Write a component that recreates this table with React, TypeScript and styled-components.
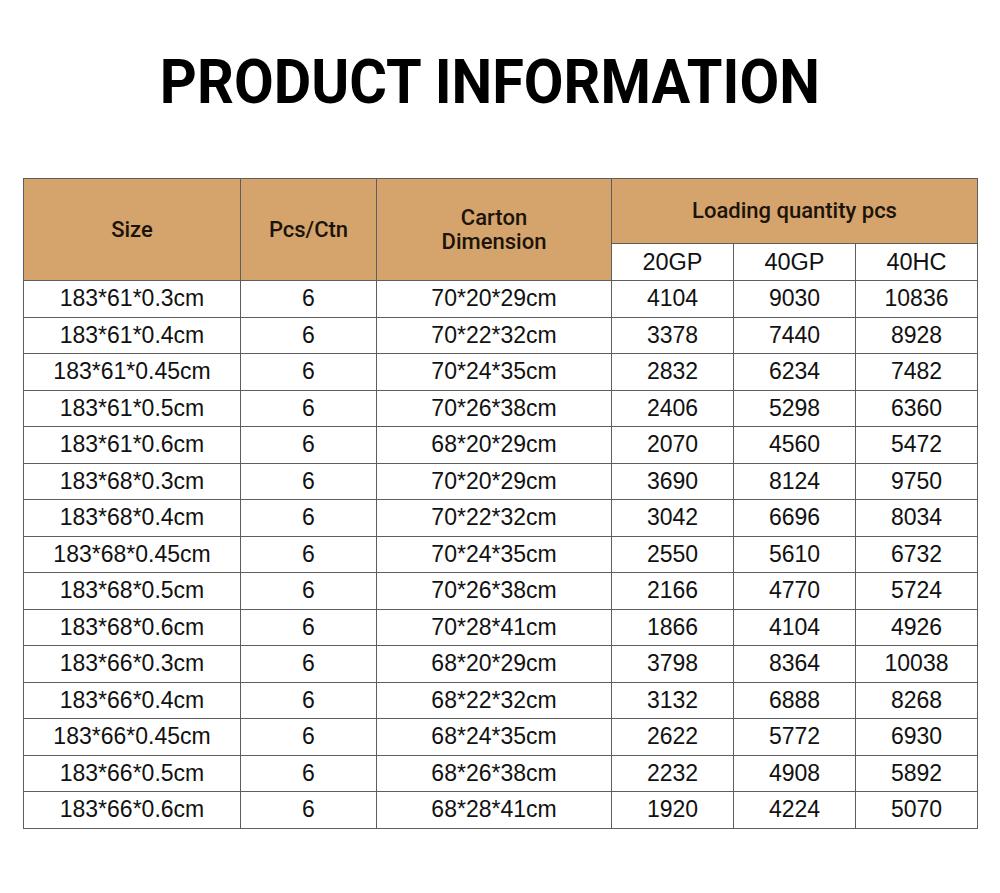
import styled, { createGlobalStyle } from "styled-components";

const GlobalStyle = createGlobalStyle`
  body {
    margin: 0;
    background: #ffffff;
    font-family: "Liberation Sans", Arial, sans-serif;
  }
`;

type Row = [string, string, string, string, string, string];

const rows: Row[] = [
  ["183*61*0.3cm", "6", "70*20*29cm", "4104", "9030", "10836"],
  ["183*61*0.4cm", "6", "70*22*32cm", "3378", "7440", "8928"],
  ["183*61*0.45cm", "6", "70*24*35cm", "2832", "6234", "7482"],
  ["183*61*0.5cm", "6", "70*26*38cm", "2406", "5298", "6360"],
  ["183*61*0.6cm", "6", "68*20*29cm", "2070", "4560", "5472"],
  ["183*68*0.3cm", "6", "70*20*29cm", "3690", "8124", "9750"],
  ["183*68*0.4cm", "6", "70*22*32cm", "3042", "6696", "8034"],
  ["183*68*0.45cm", "6", "70*24*35cm", "2550", "5610", "6732"],
  ["183*68*0.5cm", "6", "70*26*38cm", "2166", "4770", "5724"],
  ["183*68*0.6cm", "6", "70*28*41cm", "1866", "4104", "4926"],
  ["183*66*0.3cm", "6", "68*20*29cm", "3798", "8364", "10038"],
  ["183*66*0.4cm", "6", "68*22*32cm", "3132", "6888", "8268"],
  ["183*66*0.45cm", "6", "68*24*35cm", "2622", "5772", "6930"],
  ["183*66*0.5cm", "6", "68*26*38cm", "2232", "4908", "5892"],
  ["183*66*0.6cm", "6", "68*28*41cm", "1920", "4224", "5070"],
];

const Page = styled.div`
  width: 1000px;
  height: 893px;
  padding-top: 50px;
  box-sizing: border-box;
`;

const Title = styled.h1`
  margin: 0 20px 0 0;
  height: 128px;
  text-align: center;
  font-family: Roboto, "Liberation Sans", sans-serif;
  font-weight: 700;
  font-size: 62px;
  line-height: 64px;
  color: #000000;
`;

// the reference face is narrower than Roboto, so squeeze it a little
const TitleText = styled.span`
  display: inline-block;
  transform: scaleX(0.93);
`;

const Table = styled.table`
  margin-left: 23px;
  width: 955px;
  border-collapse: collapse;
  table-layout: fixed;
`;

const HeadCell = styled.th`
  background: #d4a46c;
  border: 1px solid #5e5e5e;
  font-family: Roboto, "Liberation Sans", sans-serif;
  font-weight: 500;
  font-size: 22px;
  line-height: 24px;
  color: #1c130a;
  text-align: center;
  vertical-align: middle;
  padding: 0;
`;

const SubHeadCell = styled.th`
  background: #ffffff;
  border: 1px solid #5e5e5e;
  font-weight: 400;
  font-size: 23.5px;
  color: #111111;
  text-align: center;
  padding: 0;
`;

const Cell = styled.td`
  border: 1px solid #5e5e5e;
  font-size: 23px;
  color: #111111;
  text-align: center;
  vertical-align: middle;
  padding: 0;
`;

const HeadRow = styled.tr<{ $h: number }>`
  height: ${(p) => p.$h}px;
`;

const BodyRow = styled.tr`
  height: 36.5px;
`;

export default function App() {
  return (
    <Page>
      <GlobalStyle />
      <Title>
        <TitleText>PRODUCT INFORMATION</TitleText>
      </Title>
      <Table>
        <colgroup>
          <col style={{ width: 217 }} />
          <col style={{ width: 136 }} />
          <col style={{ width: 235 }} />
          <col style={{ width: 122 }} />
          <col style={{ width: 122 }} />
          <col style={{ width: 122 }} />
        </colgroup>
        <thead>
          <HeadRow $h={65}>
            <HeadCell rowSpan={2}>Size</HeadCell>
            <HeadCell rowSpan={2}>Pcs/Ctn</HeadCell>
            <HeadCell rowSpan={2}>
              Carton
              <br />
              Dimension
            </HeadCell>
            <HeadCell colSpan={3}>Loading quantity pcs</HeadCell>
          </HeadRow>
          <HeadRow $h={37}>
            <SubHeadCell>20GP</SubHeadCell>
            <SubHeadCell>40GP</SubHeadCell>
            <SubHeadCell>40HC</SubHeadCell>
          </HeadRow>
        </thead>
        <tbody>
          {rows.map((r) => (
            <BodyRow key={r[0]}>
              {r.map((v, i) => (
                <Cell key={i}>{v}</Cell>
              ))}
            </BodyRow>
          ))}
        </tbody>
      </Table>
    </Page>
  );
}
